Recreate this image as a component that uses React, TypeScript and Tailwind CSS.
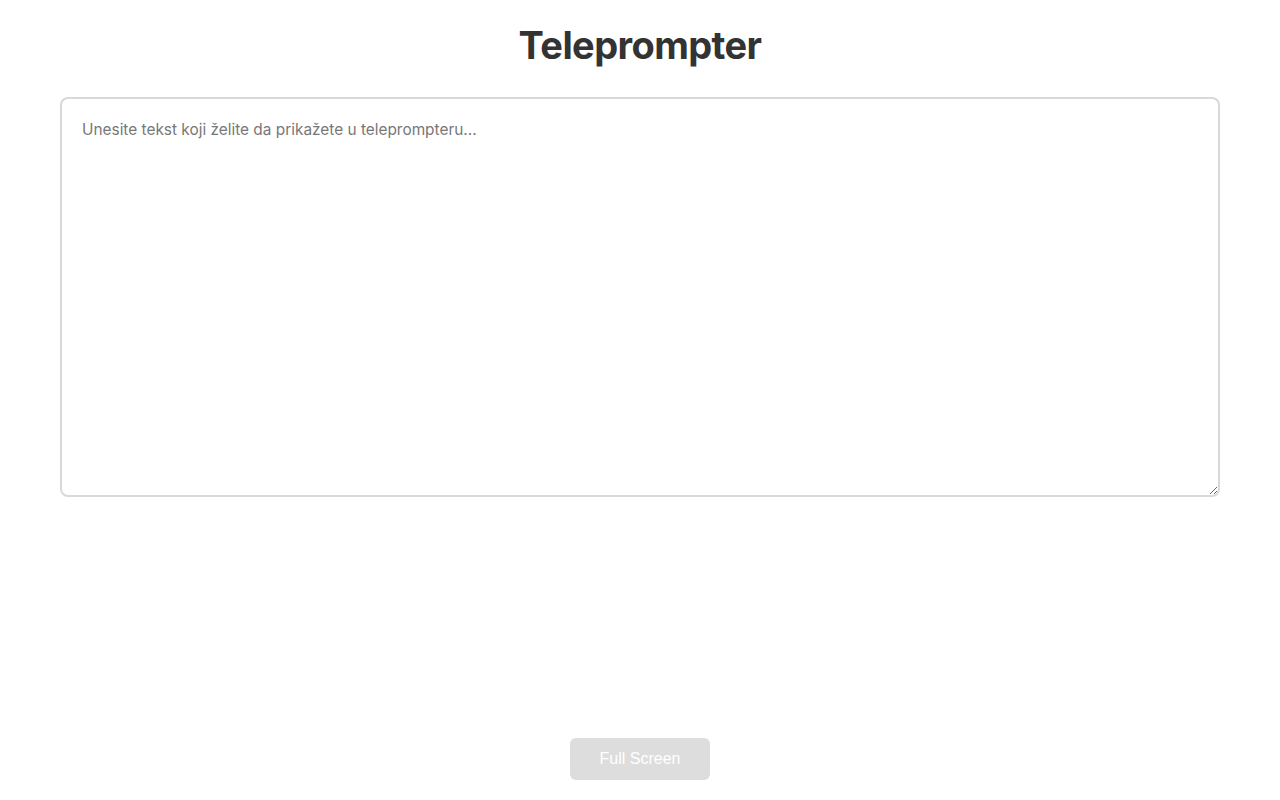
export default function App() {
  return (
    <div className="min-h-[800px] bg-white flex flex-col items-center font-['Inter',sans-serif]">
      <h1 className="mt-[20px] text-[38px] leading-[50px] font-bold text-[#333] tracking-[-0.6px]">
        Teleprompter
      </h1>
      <textarea
        className="mt-[27px] w-[1160px] h-[400px] border-2 border-[#d9d9d9] rounded-[8px] px-[20px] py-[19px] text-[15.4px] leading-[24px] text-[#333] placeholder:text-[#777] outline-none resize-y"
        placeholder="Unesite tekst koji želite da prikažete u teleprompteru..."
      />
      <div className="h-[241px]" />
      <button
        disabled
        className="w-[140px] h-[42px] rounded-[6px] bg-[#dddddd] text-white text-[16px] font-['Liberation_Sans',Arial,sans-serif]"
      >
        Full Screen
      </button>
    </div>
  );
}
